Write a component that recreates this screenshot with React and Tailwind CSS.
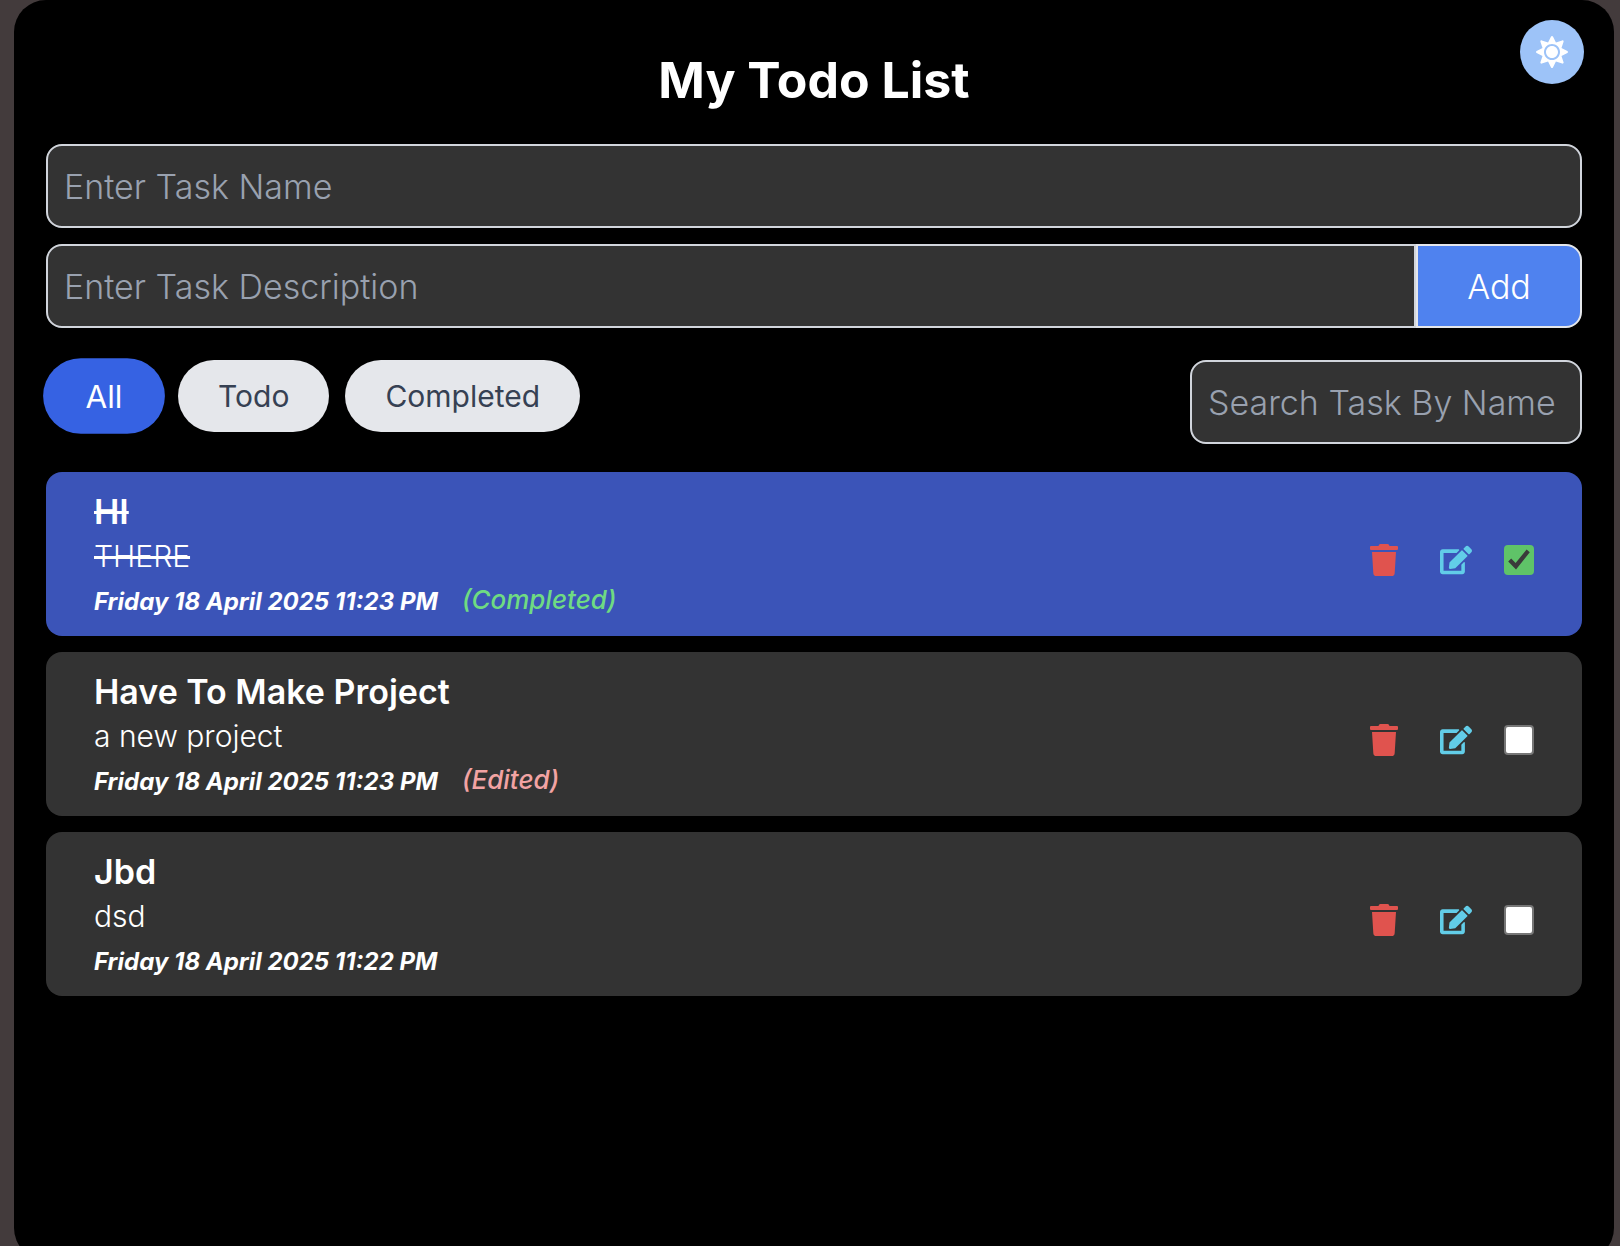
import { useState } from "react";
import { FaEdit, FaSun, FaTrash } from "react-icons/fa";

const initialTasks = [
  { id: 1, name: "HI", description: "THERE", date: "Friday 18 April 2025 11:23 PM", done: true, edited: false },
  { id: 2, name: "Have To Make Project", description: "a new project", date: "Friday 18 April 2025 11:23 PM", done: false, edited: true },
  { id: 3, name: "Jbd", description: "dsd", date: "Friday 18 April 2025 11:22 PM", done: false, edited: false },
];

const fieldStyle =
  "h-[84px] min-w-0 border-2 border-gray-300 bg-[#333333] px-4 text-[34px] font-light text-white outline-none placeholder:text-gray-400";

function FilterButton({ label, active, onClick }) {
  return (
    <button
      type="button"
      onClick={onClick}
      className={
        active
          ? "h-[72px] min-w-[116px] scale-105 rounded-full bg-[#3662e3] px-10 text-[30px] text-white"
          : "h-[72px] rounded-full bg-gray-200 px-10 text-[30px] text-gray-700"
      }
    >
      {label}
    </button>
  );
}

function CheckBox({ label, checked, onChange }) {
  return (
    <span className="relative flex">
      <input
        type="checkbox"
        aria-label={label}
        checked={checked}
        onChange={onChange}
        className="size-[30px] appearance-none rounded-[4px] border-2 border-[#767676] bg-white checked:border-[#5fc368] checked:bg-[#5fc368]"
      />
      {checked && (
        <svg viewBox="0 0 30 30" className="pointer-events-none absolute inset-0 size-[30px]" fill="#3a3a3a">
          <path d="M4.2 16.6 7.2 13.6 11.6 18 22.6 4.6 25.8 7.2 12 24.4Z" />
        </svg>
      )}
    </span>
  );
}

function TaskCard({ task, onToggle, onDelete }) {
  const strike = task.done ? "line-through" : "";
  return (
    <li
      className={`flex items-center justify-between rounded-2xl px-12 py-4 text-white ${
        task.done ? "bg-[#3b54b8]" : "bg-[#333333]"
      }`}
    >
      <div>
        <h2 className={`text-[34px] leading-[48px] font-semibold ${strike}`}>{task.name}</h2>
        <p className={`text-[30px] leading-[40px] font-light ${strike}`}>{task.description}</p>
        <div className="flex h-11 gap-6 italic">
          <time className="pt-2 text-[24px] leading-[36px] font-bold">{task.date}</time>
          {task.done && <span className="pt-1 text-[26px] leading-[40px] font-medium text-[#6fdb82]">(Completed)</span>}
          {task.edited && <span className="pt-1 text-[26px] leading-[40px] font-medium text-[#f2a3a3]">(Edited)</span>}
        </div>
      </div>
      <div className="mt-3 flex items-center gap-8 text-[32px]">
        <button type="button" aria-label={`Delete ${task.name}`} onClick={onDelete} className="mr-2 text-[#e0534e]">
          <FaTrash />
        </button>
        <button type="button" aria-label={`Edit ${task.name}`} className="text-[#62cde8]">
          <FaEdit />
        </button>
        <CheckBox label={`Complete ${task.name}`} checked={task.done} onChange={onToggle} />
      </div>
    </li>
  );
}

export default function App() {
  const [tasks, setTasks] = useState(initialTasks);
  const [filter, setFilter] = useState("All");
  const [query, setQuery] = useState("");

  const visible = tasks.filter(
    (t) =>
      (filter === "All" || (filter === "Completed") === t.done) &&
      t.name.toLowerCase().includes(query.toLowerCase())
  );

  return (
    <div className="h-screen overflow-hidden bg-[#433b3c] pr-[6px] pl-[14px] font-['Inter',sans-serif]">
      <main className="relative h-[calc(100%+14px)] rounded-[32px] bg-black px-8 pt-12">
        <button
          type="button"
          aria-label="Switch to light theme"
          className="absolute top-5 right-[30px] flex size-16 items-center justify-center rounded-full bg-[#9dc3f8] text-[32px] text-white"
        >
          <FaSun />
        </button>

        <h1 className="text-center text-[50px] leading-[64px] font-bold text-white">My Todo List</h1>

        <form className="mt-8 flex flex-col gap-4" onSubmit={(e) => e.preventDefault()}>
          <input type="text" aria-label="Task name" placeholder="Enter Task Name" className={`${fieldStyle} rounded-2xl`} />
          <div className="flex">
            <input
              type="text"
              aria-label="Task description"
              placeholder="Enter Task Description"
              className={`${fieldStyle} flex-1 rounded-l-2xl`}
            />
            <button
              type="submit"
              className="w-[166px] rounded-r-2xl border-2 border-gray-200 bg-[#4f82ef] text-[34px] font-light text-white"
            >
              Add
            </button>
          </div>
        </form>

        <div className="mt-8 flex items-start justify-between">
          <div className="flex gap-4">
            {["All", "Todo", "Completed"].map((label) => (
              <FilterButton key={label} label={label} active={filter === label} onClick={() => setFilter(label)} />
            ))}
          </div>
          <input
            type="text"
            aria-label="Search tasks"
            placeholder="Search Task By Name"
            value={query}
            onChange={(e) => setQuery(e.target.value)}
            className={`${fieldStyle} w-[392px] rounded-2xl`}
          />
        </div>

        <ul className="mt-7 flex flex-col gap-4">
          {visible.map((task) => (
            <TaskCard
              key={task.id}
              task={task}
              onToggle={() => setTasks(tasks.map((t) => (t.id === task.id ? { ...t, done: !t.done } : t)))}
              onDelete={() => setTasks(tasks.filter((t) => t.id !== task.id))}
            />
          ))}
        </ul>
      </main>
    </div>
  );
}
